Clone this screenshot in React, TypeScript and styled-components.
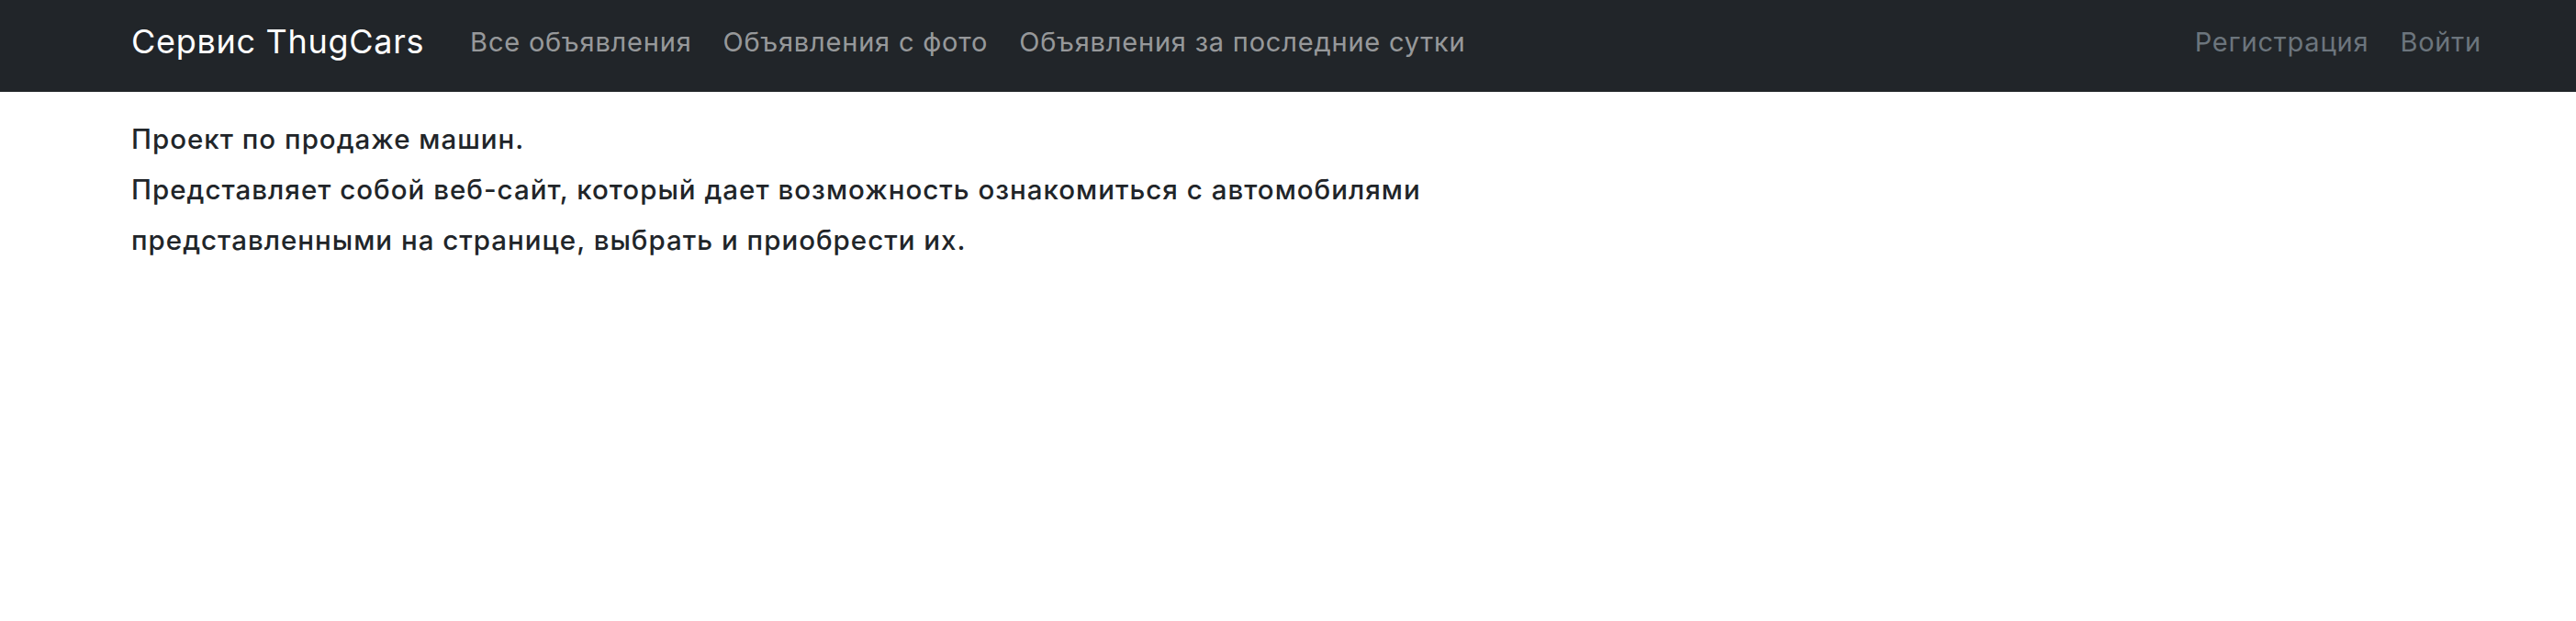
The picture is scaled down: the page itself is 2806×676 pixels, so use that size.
import styled, { createGlobalStyle } from 'styled-components';

const GlobalStyle = createGlobalStyle`
	body {
		margin: 0;
		background: #fff;
		font-family: Inter, 'Noto Sans', sans-serif;
		color: #212529;
	}
`;

const Navbar = styled.nav`
	box-sizing: border-box;
	display: flex;
	align-items: center;
	justify-content: space-between;
	height: 100px;
	padding: 0 86px 10px 143px;
	background-color: #212529;
`;

const Group = styled.div`
	display: flex;
	align-items: center;
`;

const Brand = styled.a`
	margin-right: 33px;
	color: #fff;
	font-size: 36px;
	letter-spacing: 0.7px;
	text-decoration: none;
`;

const NavLink = styled.a<{ $muted?: boolean }>`
	padding: 0 17px;
	color: ${(p) => (p.$muted ? '#6c757d' : 'rgba(255, 255, 255, 0.55)')};
	font-size: 29px;
	letter-spacing: 0.8px;
	text-decoration: none;
`;

const Content = styled.main`
	padding: 24px 143px;
`;

const Line = styled.p`
	margin: 0;
	font-size: 29.5px;
	font-weight: 500;
	letter-spacing: 1px;
	line-height: 55px;
`;

export default function App() {
	return (
		<>
			<GlobalStyle />
			<Navbar>
				<Group>
					<Brand href="#">Сервис ThugCars</Brand>
					<NavLink href="#">Все объявления</NavLink>
					<NavLink href="#">Объявления с фото</NavLink>
					<NavLink href="#">Объявления за последние сутки</NavLink>
				</Group>
				<Group>
					<NavLink href="#" $muted>Регистрация</NavLink>
					<NavLink href="#" $muted>Войти</NavLink>
				</Group>
			</Navbar>
			<Content>
				<Line>Проект по продаже машин.</Line>
				<Line>
					Представляет собой веб-сайт, который дает возможность ознакомиться с автомобилями
					<br />
					представленными на странице, выбрать и приобрести их.
				</Line>
			</Content>
		</>
	);
}
